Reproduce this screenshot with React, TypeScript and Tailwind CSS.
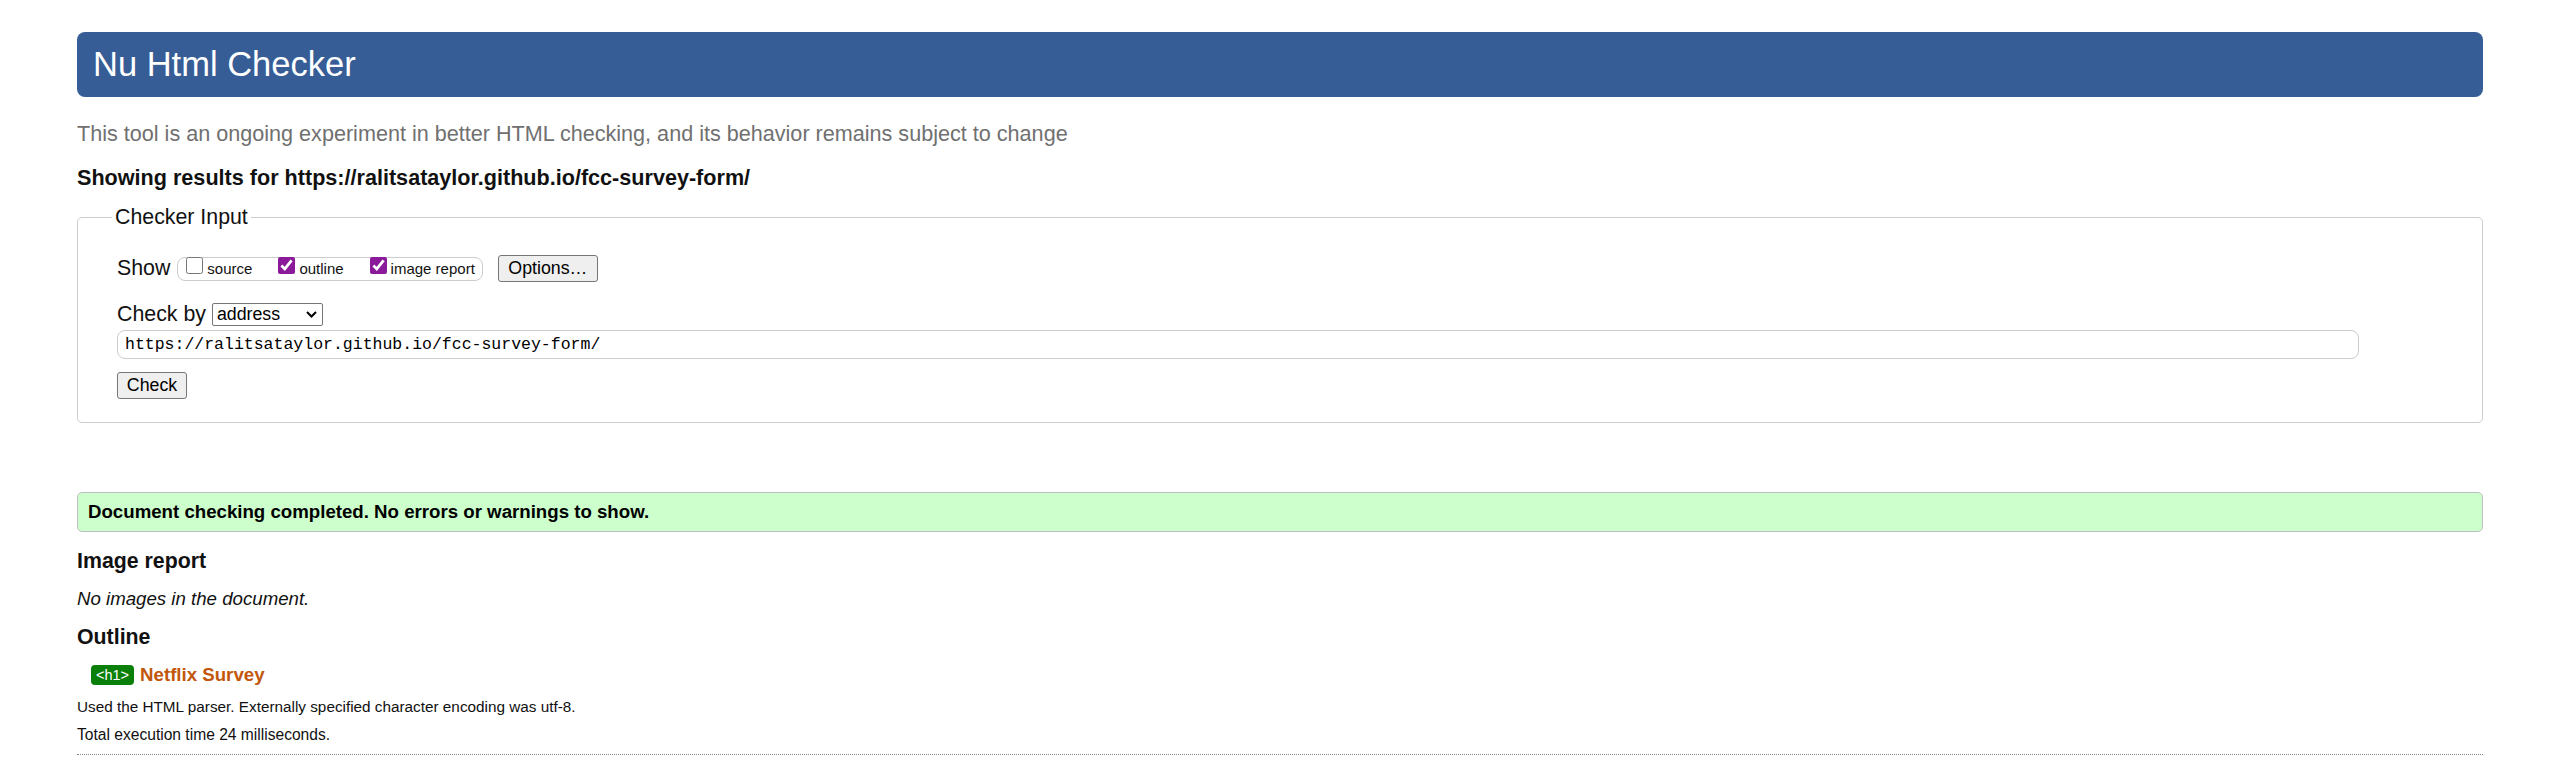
import React from "react";

function Checkbox({ label, checked }: { label: string; checked?: boolean }) {
  return (
    <label className="flex items-center">
      <input type="checkbox" defaultChecked={checked} className="mb-[6px] h-[17px] w-[17px] accent-[#8b1a9a]" />
      <span className="ml-[4px] text-[15px] leading-[18px]">{label}</span>
    </label>
  );
}

export default function App() {
  return (
    <div className="min-h-screen bg-white px-[77px] pt-[32px] font-['Liberation_Sans',Arial,sans-serif] text-[#111]">
      <header className="flex h-[65px] items-center rounded-lg bg-[#365d95] pl-4">
        <h1 className="text-[34.5px] font-normal leading-none text-white">Nu Html Checker</h1>
      </header>

      <p className="mt-[23px] text-[21.6px] leading-[27px] text-[#707070]">
        This tool is an ongoing experiment in better HTML checking, and its behavior remains subject to change
      </p>
      <p className="mt-[17px] text-[21.6px] font-bold leading-[27px]">
        Showing results for https://ralitsataylor.github.io/fcc-survey-form/
      </p>

      {/* checker form */}
      <fieldset className="mt-[13px] rounded-[5px] border border-[#ccc] pb-[23px]">
        <legend className="ml-[34px] px-[3px] text-[21.33px] leading-[27px]">Checker Input</legend>
        <div className="pl-[39px]">
          <div className="mt-[24px] flex h-[27px] items-center">
            <span className="text-[21.33px] leading-[27px]">Show</span>
            <div className="ml-[7px] flex h-[24px] items-center gap-[26px] rounded-[8px] border border-[#ccc] pl-[8px] pr-[7px]">
              <Checkbox label="source" />
              <Checkbox label="outline" checked />
              <Checkbox label="image report" checked />
            </div>
            <button className="ml-[15px] flex h-[27px] w-[100px] items-center justify-center rounded-[3px] border border-[#767676] bg-[#efefef] text-[17.78px] leading-none text-black">
              Options…
            </button>
          </div>

          <div className="mt-[19px] flex h-[27px] items-center">
            <span className="text-[21.33px] leading-[27px]">Check by</span>
            <div className="relative ml-[6px]">
              <select
                defaultValue="address"
                className="h-[23px] w-[111px] appearance-none rounded-[2px] border border-[#767676] bg-white pl-[4px] text-[17.78px] leading-none text-black"
              >
                <option value="address">address</option>
                <option value="file">file upload</option>
                <option value="text">text input</option>
              </select>
              <svg className="pointer-events-none absolute right-[6px] top-[8px]" width="11" height="7" viewBox="0 0 11 7">
                <polyline points="1,1 5.5,5.5 10,1" fill="none" stroke="#000" strokeWidth="2" />
              </svg>
            </div>
          </div>

          <input
            readOnly
            defaultValue="https://ralitsataylor.github.io/fcc-survey-form/"
            className="mt-[2px] block h-[29px] w-[2242px] rounded-[8px] border border-[#ccc] pl-[7px] font-['Liberation_Mono',monospace] text-[16.5px] text-black outline-none"
          />

          <button className="mt-[13px] flex h-[27px] w-[70px] items-center justify-center rounded-[3px] border border-[#767676] bg-[#efefef] text-[17.78px] leading-none text-black">
            Check
          </button>
        </div>
      </fieldset>

      {/* results */}
      <div className="mt-[69px] flex h-[40px] items-center rounded-[5px] border border-[#bdbdbd] bg-[#ccffcc] pl-[10px]">
        <p className="text-[18.67px] font-bold leading-[24px] text-black">
          Document checking completed. No errors or warnings to show.
        </p>
      </div>

      <h2 className="mt-[16px] text-[21.33px] font-bold leading-[27px]">Image report</h2>
      <p className="mt-[12px] text-[18.67px] italic leading-[24px]">No images in the document.</p>

      <h2 className="mt-[13px] text-[21.33px] font-bold leading-[27px]">Outline</h2>
      <div className="mt-[12px] flex h-[24px] items-center pl-[14px]">
        <span className="flex h-[20px] items-center rounded-[4px] bg-[#0a800a] px-[5px] text-[14.5px] leading-none text-white">
          &lt;h1&gt;
        </span>
        <span className="ml-[6px] text-[18.67px] font-bold leading-[24px] text-[#c2570c]">Netflix Survey</span>
      </div>

      <p className="mt-[10px] text-[15.3px] leading-[20px]">
        Used the HTML parser. Externally specified character encoding was utf-8.
      </p>
      <p className="mt-[8px] text-[15.6px] leading-[20px]">Total execution time 24 milliseconds.</p>
      <hr className="mt-[9px] border-0 border-t border-dotted border-[#888]" />
    </div>
  );
}
